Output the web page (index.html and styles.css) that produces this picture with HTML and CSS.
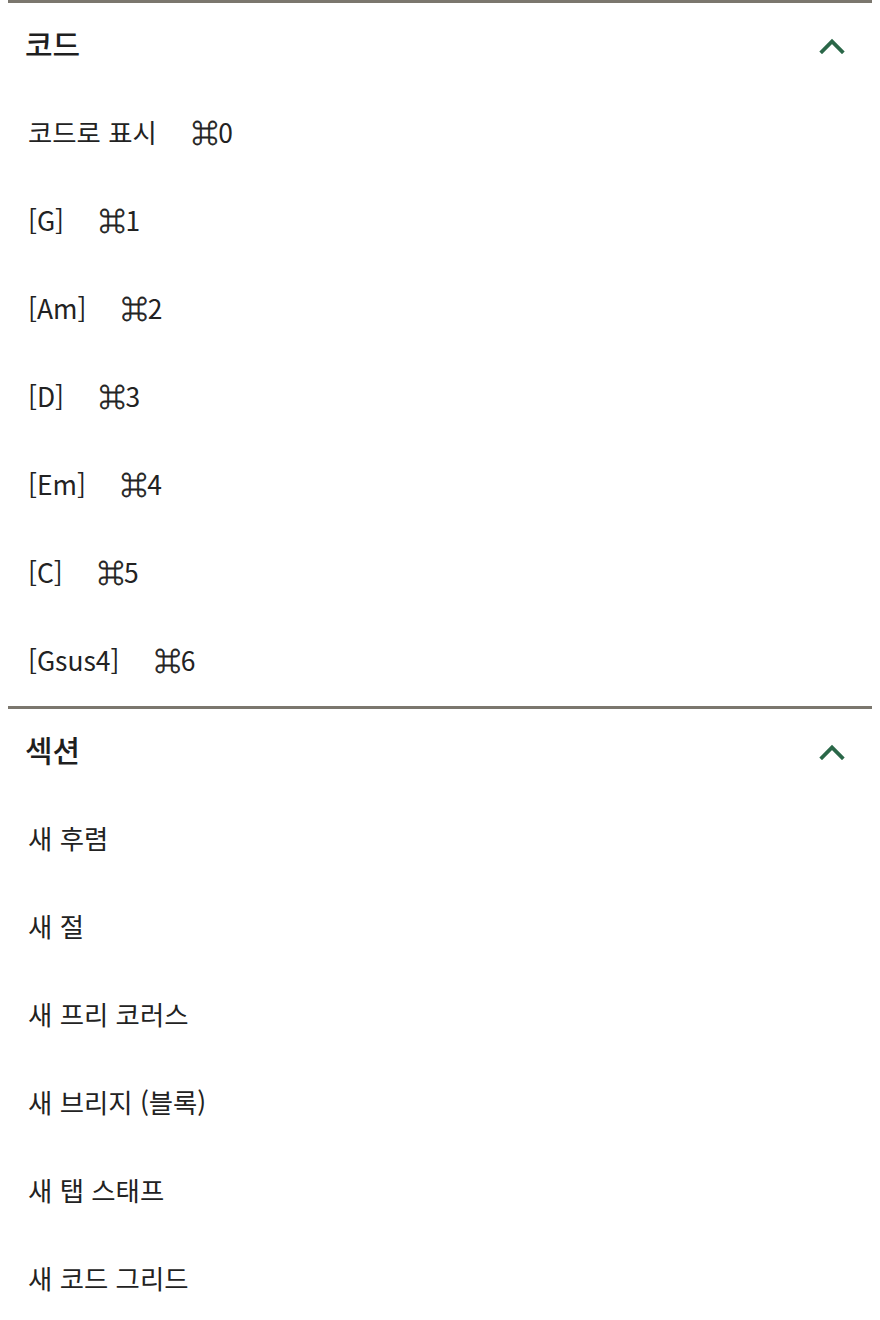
FILE: index.html
```html
<!DOCTYPE html>
<html lang="ko">
<head>
<meta charset="utf-8">
<link rel="stylesheet" href="styles.css">
</head>
<body>
<section class="group">
  <header class="group-head">
    <h2 class="group-title">코드</h2>
    <svg class="chev" viewBox="0 0 26 16" width="26" height="16"><path d="M3 13.5 L13 3.5 L23 13.5" fill="none" stroke="#2a6748" stroke-width="3.8" stroke-linecap="square" stroke-linejoin="miter"/></svg>
  </header>
  <ul class="items">
    <li class="item"><span>코드로 표시</span><span class="key"><span class="cmd">⌘</span>0</span></li>
    <li class="item"><span>[G]</span><span class="key"><span class="cmd">⌘</span>1</span></li>
    <li class="item"><span>[Am]</span><span class="key"><span class="cmd">⌘</span>2</span></li>
    <li class="item"><span>[D]</span><span class="key"><span class="cmd">⌘</span>3</span></li>
    <li class="item"><span>[Em]</span><span class="key"><span class="cmd">⌘</span>4</span></li>
    <li class="item"><span>[C]</span><span class="key"><span class="cmd">⌘</span>5</span></li>
    <li class="item"><span>[Gsus4]</span><span class="key"><span class="cmd">⌘</span>6</span></li>
  </ul>
</section>
<section class="group">
  <header class="group-head">
    <h2 class="group-title">섹션</h2>
    <svg class="chev" viewBox="0 0 26 16" width="26" height="16"><path d="M3 13.5 L13 3.5 L23 13.5" fill="none" stroke="#2a6748" stroke-width="3.8" stroke-linecap="square" stroke-linejoin="miter"/></svg>
  </header>
  <ul class="items">
    <li class="item"><span>새 후렴</span></li>
    <li class="item"><span>새 절</span></li>
    <li class="item"><span>새 프리 코러스</span></li>
    <li class="item"><span>새 브리지 (블록)</span></li>
    <li class="item"><span>새 탭 스태프</span></li>
    <li class="item"><span>새 코드 그리드</span></li>
  </ul>
</section>
</body>
</html>
```

FILE: styles.css
```css
html, body {
  margin: 0;
  padding: 0;
  background: #ffffff;
}
body {
  margin: 0 8px;
  font-family: "Noto Sans CJK KR", "Noto Sans", sans-serif;
  color: #222222;
}
.group {
  border-top: 3px solid #7b776e;
}
.group-head {
  height: 80px;
  display: flex;
  align-items: center;
  justify-content: space-between;
  padding: 0 27px 0 17px;
}
.group-title {
  margin: 0;
  font-size: 30px;
  font-weight: 500;
  line-height: 1;
  color: #1f1f1f;
}
.chev {
  display: block;
  margin-top: 6px;
}
.items {
  list-style: none;
  margin: 0;
  padding: 5px 0 2px 20px;
}
.item {
  height: 88px;
  display: flex;
  align-items: center;
  font-size: 26.4px;
  line-height: 1;
}
.key {
  margin-left: 35px;
}
.cmd {
  -webkit-text-stroke: 0.8px #222222;
}
```
